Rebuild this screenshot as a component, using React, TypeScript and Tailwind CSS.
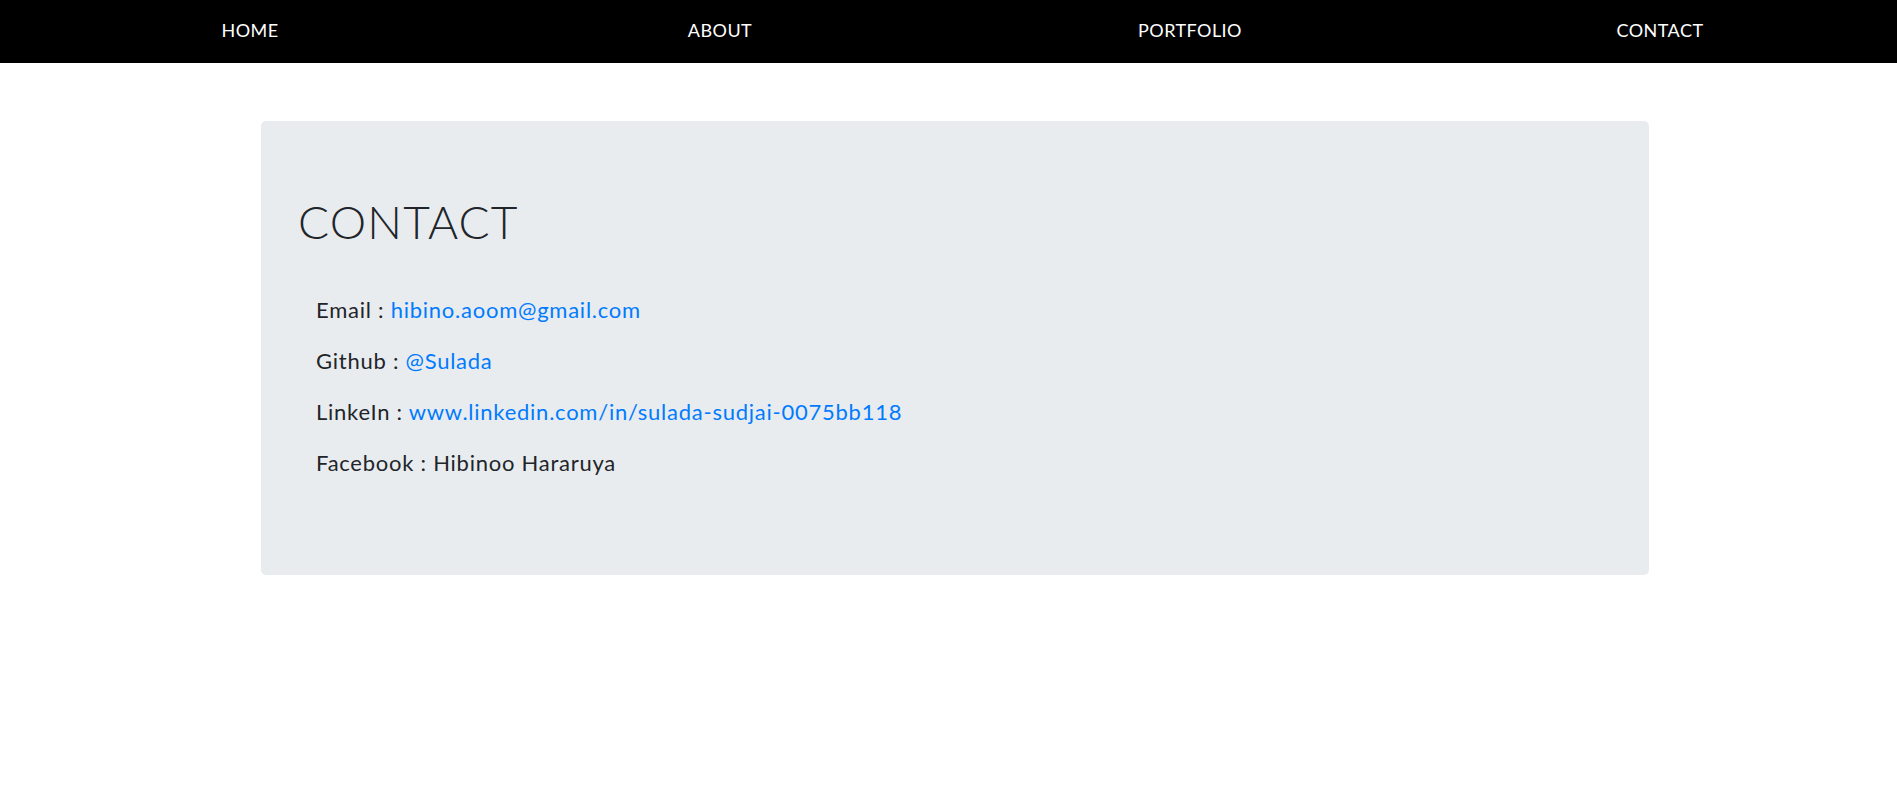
import React from "react";

const font = { fontFamily: "Lato, 'Open Sans', sans-serif" };

export default function App() {
  const nav = ["HOME", "ABOUT", "PORTFOLIO", "CONTACT"];
  return (
    <div className="min-h-[799px] bg-white" style={font}>
      <nav className="h-[63px] bg-black flex items-center pl-[15px] pr-[2px] pb-[3px]">
        {nav.map((n) => (
          <div key={n} className="flex-1 flex justify-center">
            <a className="text-white text-[18px] leading-none tracking-[0.45px]" href="#">
              {n}
            </a>
          </div>
        ))}
      </nav>
      <div className="mt-[58px] ml-[261px] w-[1388px] h-[454px] bg-[#e9ecef] rounded-[5px] pt-[73px] px-[37px]">
        <h1 className="text-[46px] leading-[56px] font-light text-[#212529] tracking-[1.2px]">CONTACT</h1>
        <div className="mt-[34px] ml-[18px] text-[22px] leading-[51px] text-[#212529] tracking-[0.75px]">
          <p>
            Email : <a className="text-[#007bff]" href="#">hibino.aoom@gmail.com</a>
          </p>
          <p>
            Github : <a className="text-[#007bff]" href="#">@Sulada</a>
          </p>
          <p>
            LinkeIn : <a className="text-[#007bff]" href="#">www.linkedin.com/in/sulada-sudjai-0075bb118</a>
          </p>
          <p>Facebook : Hibinoo Hararuya</p>
        </div>
      </div>
    </div>
  );
}
